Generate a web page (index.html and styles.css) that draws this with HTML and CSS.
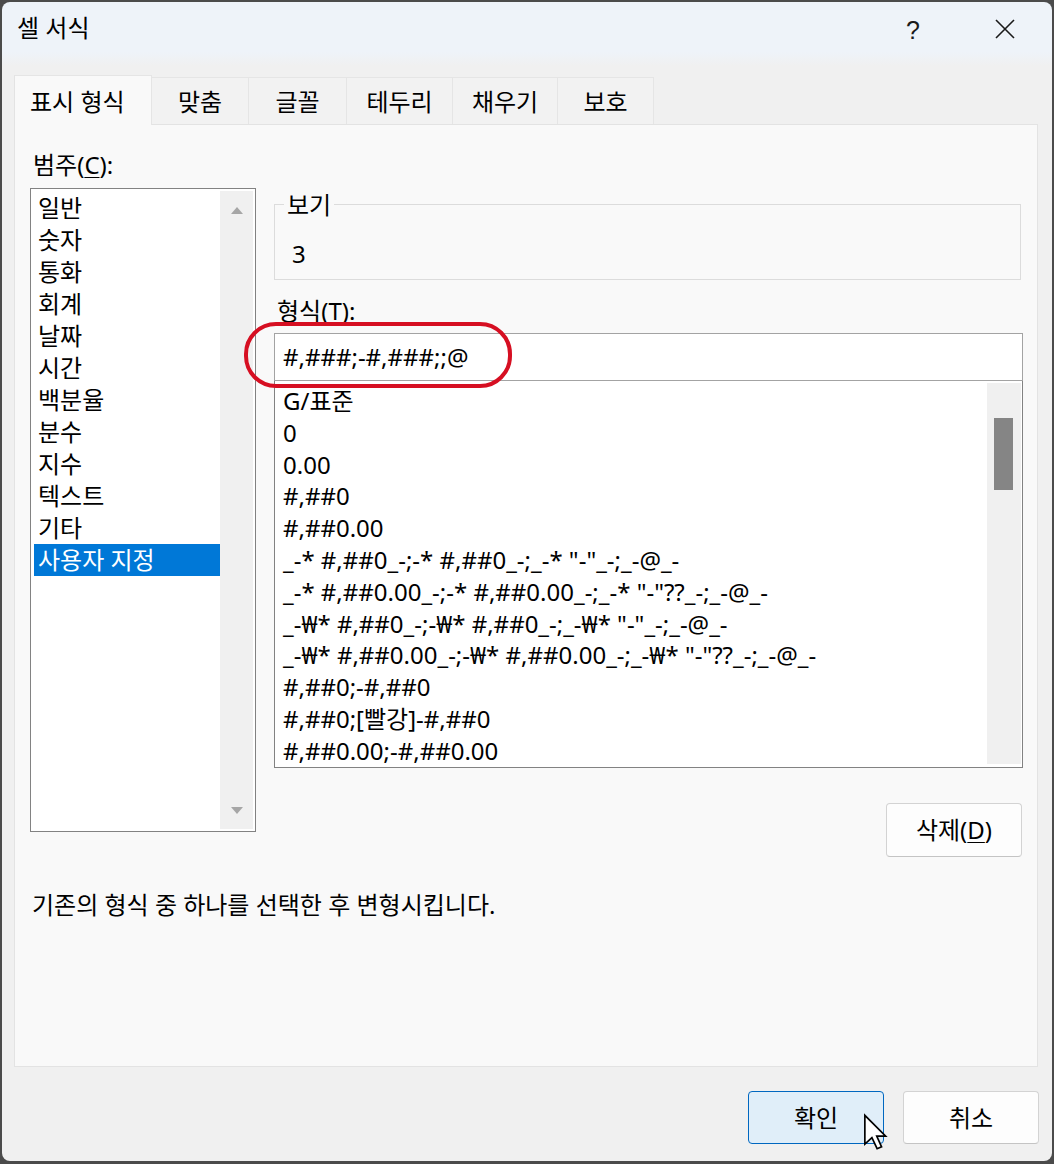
FILE: index.html
```html
<!DOCTYPE html>
<html lang="ko">
<head>
<meta charset="utf-8">
<title>셀 서식</title>
<link rel="stylesheet" href="styles.css">
</head>
<body>
<div class="window">
  <div class="titlebar">
    <span class="title">셀 서식</span>
    <div class="controls">
      <span class="ctl help">?</span>
      <span class="ctl close">
        <svg width="20" height="20" viewBox="0 0 20 20"><path d="M1 1 L19 19 M19 1 L1 19" stroke="#1a1a1a" stroke-width="1.6" fill="none"/></svg>
      </span>
    </div>
  </div>

  <div class="tabs">
    <div class="tab active">표시 형식</div>
    <div class="tab t2">맞춤</div>
    <div class="tab t3">글꼴</div>
    <div class="tab t4">테두리</div>
    <div class="tab t5">채우기</div>
    <div class="tab t6">보호</div>
  </div>

  <div class="panel">
    <div class="cols">
      <div class="left">
        <div class="label cat-label">범주(<u>C</u>):</div>
        <div class="listbox cat">
          <ul class="items">
            <li>일반</li>
            <li>숫자</li>
            <li>통화</li>
            <li>회계</li>
            <li>날짜</li>
            <li>시간</li>
            <li>백분율</li>
            <li>분수</li>
            <li>지수</li>
            <li>텍스트</li>
            <li>기타</li>
            <li class="selected">사용자 지정</li>
          </ul>
          <div class="vscroll arrows">
            <span class="arrow up"></span>
            <span class="arrow down"></span>
          </div>
        </div>
      </div>

      <div class="right">
        <div class="preview">
          <div class="legend">보기</div>
          <div class="sample">3</div>
        </div>
        <div class="label fmt-label">형식(<u>T</u>):</div>
        <div class="input-wrap">
          <div class="input">#,###;-#,###;;@</div>
          <div class="mark"></div>
        </div>
        <div class="listbox fmt">
          <ul class="items">
            <li>G/표준</li>
            <li>0</li>
            <li>0.00</li>
            <li>#,##0</li>
            <li>#,##0.00</li>
            <li>_-* #,##0_-;-* #,##0_-;_-* "-"_-;_-@_-</li>
            <li>_-* #,##0.00_-;-* #,##0.00_-;_-* "-"??_-;_-@_-</li>
            <li>_-₩* #,##0_-;-₩* #,##0_-;_-₩* "-"_-;_-@_-</li>
            <li>_-₩* #,##0.00_-;-₩* #,##0.00_-;_-₩* "-"??_-;_-@_-</li>
            <li>#,##0;-#,##0</li>
            <li>#,##0;[빨강]-#,##0</li>
            <li>#,##0.00;-#,##0.00</li>
          </ul>
          <div class="vscroll">
            <span class="thumb"></span>
          </div>
        </div>
        <div class="del-row">
          <button class="btn del">삭제(<u>D</u>)</button>
        </div>
      </div>
    </div>
    <p class="desc">기존의 형식 중 하나를 선택한 후 변형시킵니다.</p>
  </div>

  <div class="footer">
    <button class="btn primary">확인</button>
    <button class="btn">취소</button>
  </div>

  <svg class="cursor" width="26" height="38" viewBox="0 0 14 20">
    <path d="M1 1 L1 16.5 L4.8 13 L7.6 19 L10 18 L7.4 12.2 L12.2 12.2 Z" fill="#fff" stroke="#000" stroke-width="0.9" stroke-linejoin="miter"/>
  </svg>
</div>
</body>
</html>
```

FILE: styles.css
```css
* { box-sizing: border-box; }
html, body { margin: 0; padding: 0; }
body {
  background: #4b4b4b;
  width: 1054px;
  height: 1164px;
  overflow: hidden;
  font-family: "Noto Sans", "Noto Sans CJK KR", sans-serif;
  font-size: 24px;
  color: #000;
}
.window {
  position: relative;
  margin: 2px 0 0 2px;
  width: 1050px;
  height: 1159px;
  border-radius: 8px;
  overflow: hidden;
  background: linear-gradient(#eef3f9 0, #eef3f9 50px, #f0f0f0 64px, #f0f0f0 100%);
}

/* title bar */
.titlebar {
  height: 52px;
  display: flex;
  align-items: center;
  justify-content: space-between;
  padding-left: 15px;
}
.title { line-height: 30px; }
.controls {
  display: flex;
  height: 100%;
  gap: 46px;
  margin-right: 24px;
}
.ctl {
  width: 46px;
  display: flex;
  align-items: center;
  justify-content: center;
  line-height: 30px;
  color: #1a1a1a;
}
.help { padding-top: 3px; font-family: "Liberation Sans", sans-serif; font-size: 25px; }
.close svg { display: block; margin-top: 2px; }

/* tabs */
.tabs {
  display: flex;
  align-items: flex-end;
  margin: 21px 0 0 12px;
  height: 49px;
}
.tab {
  height: 47px;
  display: flex;
  align-items: center;
  justify-content: center;
  background: #f2f2f2;
  border: 1px solid #e5e5e5;
  border-left: none;
  border-bottom: none;
  line-height: 30px;
  padding-top: 2px;
}
.tab.active {
  width: 138px;
  height: 50px;
  margin-bottom: -1px;
  position: relative;
  z-index: 1;
  background: #f9f9f9;
  border-left: 1px solid #e3e3e3;
  justify-content: flex-start;
  padding-left: 15px;
}
.t2 { width: 97px; }
.t3 { width: 98px; }
.t4 { width: 106px; }
.t5 { width: 105px; }
.t6 { width: 96px; }

/* panel */
.panel {
  margin-left: 12px;
  width: 1024px;
  height: 943px;
  background: #f9f9f9;
  border: 1px solid #e3e3e3;
  padding: 24px 14px 0 15px;
}
.cols {
  display: flex;
  gap: 18px;
  align-items: flex-start;
}
.left { width: 226px; }
.right { width: 749px; }

.label { line-height: 32px; height: 32px; }
.cat-label { margin: 0 0 7px 3px; }
u { text-underline-offset: 3px; text-decoration-thickness: 1px; }

/* list boxes */
.listbox {
  display: flex;
  background: #fff;
  border: 1px solid #828282;
  overflow: hidden;
}
.items {
  list-style: none;
  margin: 0;
  flex: 1;
  min-width: 0;
}
.items li {
  line-height: 32px;
  height: 32px;
  white-space: nowrap;
}
.cat { height: 644px; }
.cat .items { padding: 3px 0 0 3px; }
.cat .items li { padding-left: 4px; }
.cat .items li.selected { background: #0078d7; color: #fff; }

.vscroll {
  background: #f0f0f0;
  display: flex;
  flex-direction: column;
}
.cat .vscroll {
  width: 33px;
  margin: 2px 2px 2px 0;
  justify-content: space-between;
  align-items: center;
  padding: 16px 0 15px;
}
.arrow {
  width: 0;
  height: 0;
  border-left: 6px solid transparent;
  border-right: 6px solid transparent;
}
.arrow.up { border-bottom: 7px solid #a6a6a6; }
.arrow.down { border-top: 7px solid #a6a6a6; }

/* preview group */
.preview {
  margin-top: 55px;
  width: 747px;
  height: 76px;
  border: 1px solid #dcdcdc;
}
.legend {
  width: fit-content;
  margin: -14px 0 0 9px;
  padding: 0 3px;
  line-height: 28px;
  height: 28px;
  background: #f9f9f9;
}
.sample {
  margin-top: 20px;
  padding-left: 17px;
  line-height: 30px;
}

.fmt-label { margin: 16px 0 0 3px; line-height: 30px; height: 30px; }

/* input */
.input-wrap {
  position: relative;
  margin-top: 7px;
}
.input {
  height: 48px;
  line-height: 46px;
  background: #fff;
  border: 1px solid #a3a3a3;
  padding-left: 8px;
  white-space: nowrap;
}
.mark {
  position: absolute;
  left: -30px;
  top: -11px;
  width: 268px;
  height: 66px;
  border: 4px solid #d60f22;
  border-radius: 32px;
}

.fmt {
  height: 388px;
  margin-top: -1px;
}
.fmt .items { padding: 4px 0 0 8px; }
.fmt .items li { height: 31.8px; line-height: 31.8px; }
.fmt .vscroll {
  width: 34px;
  margin: 2px 1px 3px 0;
}
.thumb {
  display: block;
  width: 19px;
  height: 72px;
  margin: 35px 0 0 7px;
  background: #858585;
}

.del-row {
  display: flex;
  justify-content: flex-end;
  margin-top: 35px;
  padding-right: 1px;
}

/* buttons */
.btn {
  width: 136px;
  height: 53px;
  font-family: "Noto Sans", "Noto Sans CJK KR", sans-serif;
  font-size: 24px;
  color: #000;
  background: #fdfdfd;
  border: 1px solid #d3d3d3;
  border-bottom-color: #c4c4c4;
  border-radius: 4px;
  padding: 0;
  line-height: 30px;
}
.btn.del { height: 54px; }
.btn.primary {
  background: #e0eef9;
  border: 1px solid #0067c0;
}

.desc {
  margin: 32px 0 0 2px;
  line-height: 32px;
}

.footer {
  display: flex;
  justify-content: flex-end;
  gap: 19px;
  margin-top: 24px;
  padding-right: 13px;
}

.cursor {
  position: absolute;
  left: 861px;
  top: 1111px;
}
```
